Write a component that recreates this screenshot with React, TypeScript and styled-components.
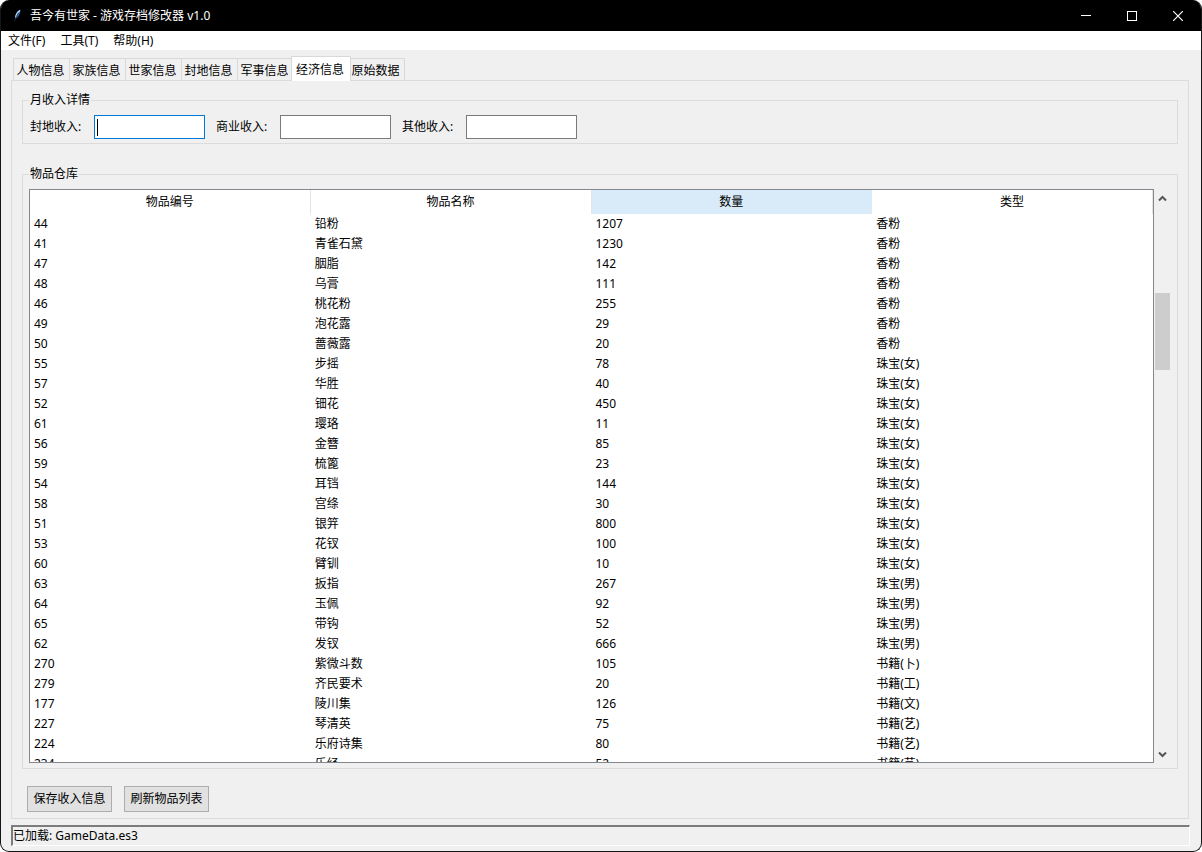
import React, { useRef } from "react";
import styled, { createGlobalStyle, css } from "styled-components";

const GlobalStyle = createGlobalStyle`
  *, *::before, *::after { box-sizing: border-box; }
  html { background: #fff; }
  body {
    margin: 0;
    font: 12px/18px "Noto Sans", "Noto Sans CJK SC", sans-serif;
    color: #000;
  }
  button, input { font: inherit; color: inherit; }
`;

const Window = styled.div`
  display: flex;
  flex-direction: column;
  height: 100vh;
  min-height: 400px;
  border: 1px solid #161616;
  border-top: 0;
  border-radius: 9px;
  background: #f0f0f0;
  overflow: hidden;
`;

const TitleBar = styled.header`
  display: flex;
  align-items: center;
  height: 31px;
  flex: none;
  padding-left: 10px;
  background: #000;
  color: #fff;
`;

const Title = styled.h1`
  flex: 1;
  margin: 0 0 0 7px;
  font-size: 12px;
  font-weight: 400;
`;

const CaptionButton = styled.button`
  display: grid;
  place-items: center;
  width: 46px;
  height: 31px;
  padding: 0;
  border: 0;
  background: none;
  color: #fff;
`;

const MenuBar = styled.nav`
  display: flex;
  flex: none;
  gap: 15px;
  height: 19px;
  padding-left: 7px;
  background: #fff;
`;

const MenuButton = styled.button`
  padding: 0;
  border: 0;
  background: none;
  line-height: 20px;
`;

const Notebook = styled.main`
  display: flex;
  flex-direction: column;
  flex: 1;
  min-height: 0;
  padding: 6px 12px 6px 10px;
`;

const TabStrip = styled.div`
  display: flex;
  flex: none;
  align-items: flex-end;
  height: 24px;
  padding-left: 3px;
`;

const Tab = styled.button<{ $selected?: boolean }>`
  width: 57px;
  height: 22px;
  margin-left: -1px;
  padding: 2px 2px 0 0;
  border: 1px solid #d9d9d9;
  border-bottom: 0;
  background: #f0f0f0;
  white-space: nowrap;
  line-height: 20px;
  ${(p) =>
    p.$selected &&
    css`
      z-index: 1;
      width: 60px;
      height: 25px;
      margin: 0 -2px -1px -3px;
      background: #fff;
    `}
`;

const Pane = styled.section`
  display: flex;
  flex-direction: column;
  flex: 1;
  min-height: 0;
  padding: 10px 10px 6px;
  border: 1px solid #dcdcdc;
`;

const Group = styled.fieldset<{ $fill?: boolean }>`
  display: flex;
  flex-direction: column;
  flex: ${(p) => (p.$fill ? "1" : "none")};
  min-width: 0;
  min-height: 0;
  margin: ${(p) => (p.$fill ? "21px 0 0" : "0")};
  padding: 6px 6px ${(p) => (p.$fill ? "5px" : "4px")};
  border: 1px solid #dcdcdc;
`;

const GroupTitle = styled.legend`
  height: 18px;
  padding: 0 1px;
`;

const FieldRow = styled.div`
  display: flex;
  gap: 11px;
  padding-left: 1px;
`;

const Field = styled.label`
  display: flex;
  align-items: center;
`;

const FieldName = styled.span`
  width: 64px;
`;

const Entry = styled.input<{ $active?: boolean }>`
  width: 111px;
  height: 24px;
  padding: 0 3px;
  border: 1px solid ${(p) => (p.$active ? "#0078d7" : "#7a7a7a")};
  border-radius: 0;
  outline: 0;
  background: #fff;
  ${(p) =>
    p.$active &&
    css`
      background: linear-gradient(#000, #000) 2px 3px / 1px 17px no-repeat #fff;
      caret-color: transparent;
    `}
`;

const TreeArea = styled.div`
  display: flex;
  flex: 1;
  min-height: 0;
`;

const TreeFrame = styled.div`
  flex: 1;
  min-width: 0;
  border: 1px solid #828790;
  background: #fff;
  overflow: hidden;
`;

const Table = styled.table`
  width: 100%;
  table-layout: fixed;
  border-collapse: separate;
  border-spacing: 0;
`;

const HeadCell = styled.th<{ $hot?: boolean }>`
  height: 24px;
  padding: 0;
  border-right: 1px solid ${(p) => (p.$hot ? "#d9ebf9" : "#e5e5e5")};
  background: ${(p) => (p.$hot ? "#d9ebf9" : "#fff")};
  font-weight: 400;
`;

const Cell = styled.td`
  height: 20px;
  padding: 0 4px;
  line-height: 20px;
  white-space: nowrap;
`;

const ScrollBar = styled.div`
  display: flex;
  flex-direction: column;
  width: 17px;
  padding: 0 1px;
`;

const ScrollArrow = styled.button`
  display: grid;
  place-items: center;
  flex: none;
  height: 18px;
  padding: 0;
  border: 0;
  background: none;
`;

const Track = styled.div`
  display: grid;
  grid-template-rows: 160fr 143fr 697fr;
  flex: 1;
`;

const Thumb = styled.div`
  grid-row: 2;
  background: #cdcdcd;
`;

const Actions = styled.div`
  display: flex;
  flex: none;
  gap: 12px;
  padding: 17px 5px 0;
`;

const PushButton = styled.button`
  min-width: 85px;
  height: 26px;
  padding: 0 5px;
  border: 1px solid #adadad;
  background: #e1e1e1;
`;

const StatusBar = styled.footer`
  flex: none;
  height: 21px;
  margin: 0 11px 5px 10px;
  border-style: solid;
  border-width: 2px 1px 1px 2px;
  border-color: #7c7c7c #fff #fff #7c7c7c;
  line-height: 18px;
`;

const tabs = ["人物信息", "家族信息", "世家信息", "封地信息", "军事信息", "经济信息", "原始数据"];
const columns = ["物品编号", "物品名称", "数量", "类型"];

const items: [number, string, number, string][] = [
  [44, "铅粉", 1207, "香粉"],
  [41, "青雀石黛", 1230, "香粉"],
  [47, "胭脂", 142, "香粉"],
  [48, "乌膏", 111, "香粉"],
  [46, "桃花粉", 255, "香粉"],
  [49, "泡花露", 29, "香粉"],
  [50, "蔷薇露", 20, "香粉"],
  [55, "步摇", 78, "珠宝(女)"],
  [57, "华胜", 40, "珠宝(女)"],
  [52, "钿花", 450, "珠宝(女)"],
  [61, "璎珞", 11, "珠宝(女)"],
  [56, "金簪", 85, "珠宝(女)"],
  [59, "梳篦", 23, "珠宝(女)"],
  [54, "耳铛", 144, "珠宝(女)"],
  [58, "宫绦", 30, "珠宝(女)"],
  [51, "银笄", 800, "珠宝(女)"],
  [53, "花钗", 100, "珠宝(女)"],
  [60, "臂钏", 10, "珠宝(女)"],
  [63, "扳指", 267, "珠宝(男)"],
  [64, "玉佩", 92, "珠宝(男)"],
  [65, "带钩", 52, "珠宝(男)"],
  [62, "发钗", 666, "珠宝(男)"],
  [270, "紫微斗数", 105, "书籍(卜)"],
  [279, "齐民要术", 20, "书籍(工)"],
  [177, "陵川集", 126, "书籍(文)"],
  [227, "琴清英", 75, "书籍(艺)"],
  [224, "乐府诗集", 80, "书籍(艺)"],
  [234, "乐经", 52, "书籍(艺)"],
];

const Feather = () => (
  <svg width="12" height="16" viewBox="0 0 12 16" aria-hidden="true">
    <path d="M9.500 1.500C6.500 2.500 4 6.400 4 11c3-1.600 5.400-5 5.500-9.500z" fill="#3d78b8" />
    <path d="M9 2.500C6.500 4 5 6.500 4.600 9.500" stroke="#b9dcf6" strokeWidth="1.200" fill="none" />
    <path d="M7.500 5C6 7.500 4.500 10 3.500 13.500" stroke="#16324f" strokeWidth=".8" fill="none" />
  </svg>
);

const Chevron = ({ down }: { down?: boolean }) => (
  <svg width="9" height="7" viewBox="0 0 9 7" aria-hidden="true">
    <path d={down ? "M1 1.500L4.500 5L8 1.500" : "M1 5.500L4.500 2L8 5.500"} fill="none" stroke="#555" strokeWidth="2" />
  </svg>
);

export default function App() {
  const frame = useRef<HTMLDivElement>(null);
  const scroll = (dy: number) => frame.current?.scrollBy(0, dy);

  return (
    <>
      <GlobalStyle />
      <Window>
        <TitleBar>
          <Feather />
          <Title>吾今有世家 - 游戏存档修改器 v1.0</Title>
          <CaptionButton aria-label="最小化">
            <svg width="10" height="10"><path d="M0 4.500H10" stroke="#fff" /></svg>
          </CaptionButton>
          <CaptionButton aria-label="最大化">
            <svg width="10" height="10"><rect x=".5" y=".5" width="9" height="9" fill="none" stroke="#fff" /></svg>
          </CaptionButton>
          <CaptionButton aria-label="关闭">
            <svg width="10" height="10"><path d="M0 0L10 10M10 0L0 10" stroke="#fff" strokeWidth="1.200" /></svg>
          </CaptionButton>
        </TitleBar>
        <MenuBar>
          <MenuButton>文件(F)</MenuButton>
          <MenuButton>工具(T)</MenuButton>
          <MenuButton>帮助(H)</MenuButton>
        </MenuBar>
        <Notebook>
          <TabStrip role="tablist">
            {tabs.map((name) => (
              <Tab key={name} role="tab" aria-selected={name === "经济信息"} $selected={name === "经济信息"}>
                {name}
              </Tab>
            ))}
          </TabStrip>
          <Pane>
            <Group>
              <GroupTitle>月收入详情</GroupTitle>
              <FieldRow>
                {["封地收入", "商业收入", "其他收入"].map((name, i) => (
                  <Field key={name}>
                    <FieldName>{name}:</FieldName>
                    <Entry type="text" $active={i === 0} />
                  </Field>
                ))}
              </FieldRow>
            </Group>
            <Group $fill>
              <GroupTitle>物品仓库</GroupTitle>
              <TreeArea>
                <TreeFrame ref={frame}>
                  <Table>
                    <thead>
                      <tr>
                        {columns.map((name) => (
                          <HeadCell key={name} scope="col" $hot={name === "数量"}>
                            {name}
                          </HeadCell>
                        ))}
                      </tr>
                    </thead>
                    <tbody>
                      {items.map((row) => (
                        <tr key={row[0]}>
                          {row.map((value, i) => (
                            <Cell key={i}>{value}</Cell>
                          ))}
                        </tr>
                      ))}
                    </tbody>
                  </Table>
                </TreeFrame>
                <ScrollBar>
                  <ScrollArrow aria-label="向上滚动" onClick={() => scroll(-20)}>
                    <Chevron />
                  </ScrollArrow>
                  <Track>
                    <Thumb />
                  </Track>
                  <ScrollArrow aria-label="向下滚动" onClick={() => scroll(20)}>
                    <Chevron down />
                  </ScrollArrow>
                </ScrollBar>
              </TreeArea>
            </Group>
            <Actions>
              <PushButton>保存收入信息</PushButton>
              <PushButton>刷新物品列表</PushButton>
            </Actions>
          </Pane>
        </Notebook>
        <StatusBar>已加载: GameData.es3</StatusBar>
      </Window>
    </>
  );
}
